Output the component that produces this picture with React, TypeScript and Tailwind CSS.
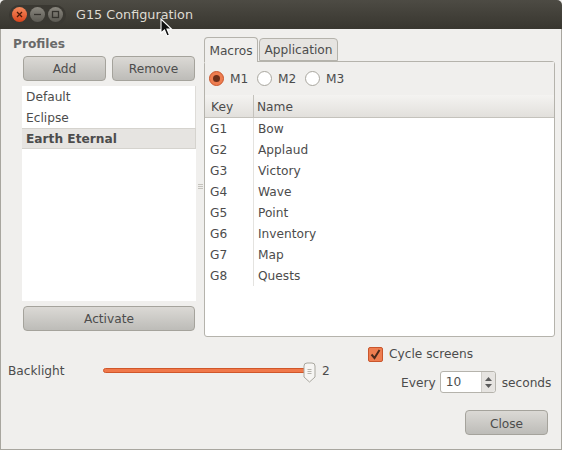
const macros = [
  ['G1', 'Bow'],
  ['G2', 'Applaud'],
  ['G3', 'Victory'],
  ['G4', 'Wave'],
  ['G5', 'Point'],
  ['G6', 'Inventory'],
  ['G7', 'Map'],
  ['G8', 'Quests'],
];

function WinButton({ kind }: { kind: 'close' | 'min' | 'max' }) {
  const bg =
    kind === 'close'
      ? 'bg-gradient-to-b from-[#f58a5c] to-[#d9431a]'
      : 'bg-gradient-to-b from-[#8a877f] to-[#5c5a53]';
  return (
    <div className={`flex h-[15px] w-[15px] items-center justify-center rounded-full ${bg}`}>
      <svg width="9" height="9" viewBox="0 0 9 9" fill="none" stroke={kind === 'close' ? '#4a1a08' : '#35332e'} strokeWidth="1.3">
        {kind === 'close' && <path d="M2 2l5 5M7 2l-5 5" />}
        {kind === 'min' && <path d="M1 4.5h7" />}
        {kind === 'max' && <rect x="1.5" y="1.5" width="6" height="6" />}
      </svg>
    </div>
  );
}

function GtkButton({ label, className }: { label: string; className: string }) {
  return (
    <div
      className={`flex h-[25px] items-center justify-center rounded-[4px] border border-[#a5a39c] bg-gradient-to-b from-[#dbd9d5] to-[#bdbcb8] pt-[2px] text-[#4c4c4c] ${className}`}
    >
      {label}
    </div>
  );
}

function Radio({ label, checked }: { label: string; checked?: boolean }) {
  return (
    <div className="flex w-[48px] items-center gap-[6px]">
      <div
        className={`flex h-[15px] w-[15px] items-center justify-center rounded-full border ${
          checked ? 'border-[#c9562c] bg-[#ee7d50]' : 'border-[#a9a79f] bg-white'
        }`}
      >
        {checked && <div className="h-[7px] w-[7px] rounded-full bg-[#6b2f1a]" />}
      </div>
      <span className="pt-[1px]">{label}</span>
    </div>
  );
}

export default function App() {
  return (
    <div className="relative flex h-[450px] w-[562px] flex-col overflow-hidden bg-[#f0efed] text-[12.2px] text-[#4c4c4c] [font-family:'DejaVu_Sans',sans-serif]">
      <div className="flex h-[29px] shrink-0 items-center rounded-t-[5px] bg-gradient-to-b from-[#4d4b44] to-[#38362f] pl-[9px]">
        <div className="flex h-[20px] items-center gap-[3px] rounded-full bg-[#3a3832] px-[3px]">
          <WinButton kind="close" />
          <WinButton kind="min" />
          <WinButton kind="max" />
        </div>
        <span className="ml-[10px] text-[12.8px] text-[#dfdbd2]">G15 Configuration</span>
      </div>

      <div className="flex min-h-0 flex-1 flex-col border-x border-b border-[#a8a69f]">
        <div className="flex h-[308px] shrink-0">
          <div className="relative flex w-[203px] shrink-0 flex-col pt-[6px]">
            <div className="ml-[12px] h-[21px] font-bold text-[#6a6a6a]">Profiles</div>
            <div className="ml-[22px] flex w-[172px] gap-[6px]">
              <GtkButton label="Add" className="w-[83px]" />
              <GtkButton label="Remove" className="w-[83px]" />
            </div>
            <div className="ml-[21px] mt-[5px] flex h-[215px] w-[174px] flex-col bg-white">
              <div className="flex h-[21px] items-center border-r border-[#dedcd8] pl-[4px] pt-[2px]">Default</div>
              <div className="flex h-[21px] items-center border-r border-[#dedcd8] pl-[4px] pt-[2px]">Eclipse</div>
              <div className="flex h-[21px] items-center border-y border-r border-[#d5d3ce] bg-[#e6e4e1] pl-[4px] pt-[2px] font-bold">
                Earth Eternal
              </div>
            </div>
            <GtkButton label="Activate" className="ml-[22px] mt-[5px] w-[172px]" />
            <div className="absolute left-[197px] top-[155px] flex w-[5px] flex-col gap-[1px]">
              <div className="h-px bg-[#c4c2bc]" />
              <div className="h-px bg-[#c4c2bc]" />
              <div className="h-px bg-[#c4c2bc]" />
            </div>
          </div>

          <div className="flex w-[351px] shrink-0 flex-col pt-[8px]">
            <div className="relative z-10 flex h-[24px] items-end gap-[1px]">
              <div className="-mb-px flex h-[25px] w-[54px] items-center justify-center rounded-t-[4px] border border-b-0 border-[#b5b3ac] bg-[#f0efed] pt-[2px]">
                Macros
              </div>
              <div className="flex h-[23px] w-[79px] items-center justify-center rounded-t-[4px] border border-[#b5b3ac] bg-[#e6e4e1] pt-[2px]">
                Application
              </div>
            </div>
            <div className="flex h-[276px] flex-col rounded-[3px] border border-[#b5b3ac] bg-white">
              <div className="flex h-[33px] items-center bg-[#f0efed] pl-[4px]">
                <Radio label="M1" checked />
                <Radio label="M2" />
                <Radio label="M3" />
              </div>
              <div className="flex h-[23px] border-b border-[#c4c2bc] bg-gradient-to-b from-[#f4f3f1] to-[#e2e0dc]">
                <div className="flex w-[49px] items-center border-r border-[#c4c2bc] pl-[6px] pt-[2px]">Key</div>
                <div className="flex items-center pl-[3px] pt-[2px]">Name</div>
              </div>
              {macros.map(([key, name]) => (
                <div key={key} className="flex h-[21px]">
                  <div className="flex w-[49px] items-center border-r border-[#e4e3e0] pl-[5px] pt-[2px]">{key}</div>
                  <div className="flex items-center pl-[4px] pt-[2px]">{name}</div>
                </div>
              ))}
            </div>
          </div>
        </div>

        <div className="flex flex-1">
          <div className="flex w-[358px] shrink-0 items-center self-start pl-[7px] pt-[24px]">
            <span className="w-[95px] pt-[1px]">Backlight</span>
            <div className="relative h-[5px] w-[208px] rounded-full border border-[#d0562a] bg-[#f0784a]">
              <svg className="absolute -right-[6px] -top-[7px]" width="13" height="21" viewBox="0 0 13 21">
                <path d="M1 4a3 3 0 0 1 3-3h5a3 3 0 0 1 3 3v11l-5.5 5L1 15z" fill="#f6f5f3" stroke="#a9a79f" />
                <path d="M4.5 7.5h4M4.5 9.5h4M4.5 11.5h4" stroke="#b5b3ac" />
              </svg>
            </div>
            <span className="ml-[11px] pt-[1px]">2</span>
          </div>

          <div className="flex flex-1 flex-col pt-[8px]">
            <div className="ml-[9px] flex items-center gap-[6px]">
              <div className="flex h-[15px] w-[15px] items-center justify-center rounded-[2px] border border-[#c9562c] bg-[#ee7d50]">
                <svg width="13" height="13" viewBox="0 0 13 13" fill="none" stroke="#4c2a1c" strokeWidth="2">
                  <path d="M2.5 6.5l3 3.5 5-8" />
                </svg>
              </div>
              <span>Cycle screens</span>
            </div>
            <div className="mt-[8px] ml-[42px] flex items-center">
              <span className="pt-[2px]">Every</span>
              <div className="ml-[4px] flex h-[22px] w-[56px] rounded-[3px] border border-[#b5b3ac] bg-white">
                <div className="flex-1 pl-[5px] leading-[21px]">10</div>
                <div className="flex w-[14px] flex-col items-center justify-center gap-[3px] rounded-r-[3px] border-l border-[#d0cec9] bg-[#e6e4e1]">
                  <svg width="7" height="4" viewBox="0 0 7 4" fill="#5c5c5c"><path d="M3.5 0L7 4H0z" /></svg>
                  <svg width="7" height="4" viewBox="0 0 7 4" fill="#5c5c5c"><path d="M0 0h7L3.5 4z" /></svg>
                </div>
              </div>
              <span className="ml-[6px] pt-[2px]">seconds</span>
            </div>
            <GtkButton label="Close" className="ml-[106px] mt-[17px] w-[83px]" />
          </div>
        </div>
      </div>

      <svg className="absolute left-[160px] top-[18px]" width="13" height="20" viewBox="0 0 13 20">
        <path d="M1 1v14l3.5-3 2.5 6 2.5-1-2.5-6h4.5z" fill="#111" stroke="#fff" strokeWidth="1.1" />
      </svg>
    </div>
  );
}
